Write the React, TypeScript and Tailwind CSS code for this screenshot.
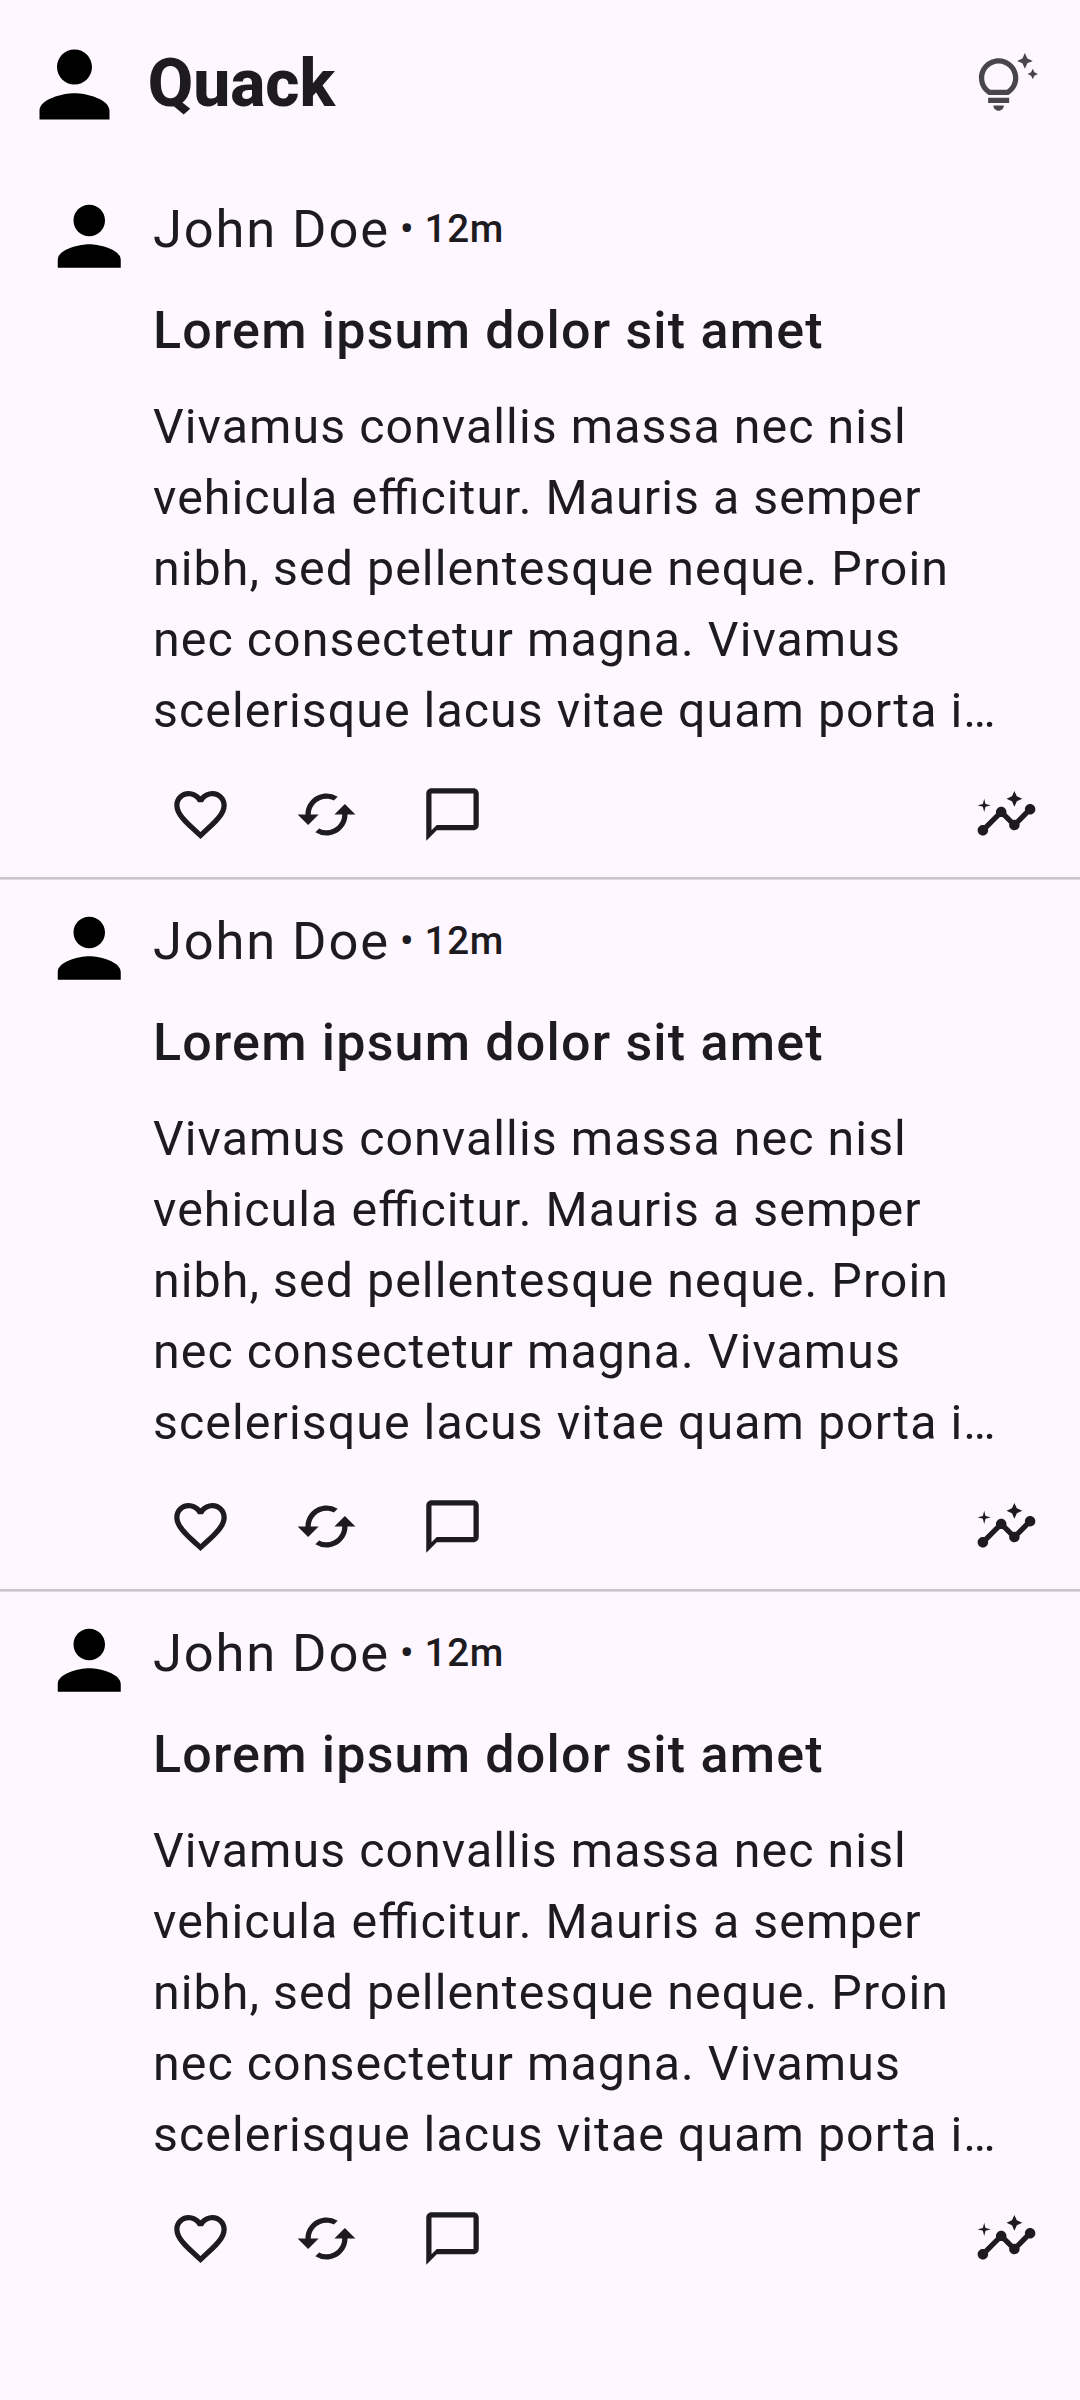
import React from "react";
import {
  MdCached,
  MdChatBubbleOutline,
  MdFavoriteBorder,
  MdInsights,
  MdOutlineTipsAndUpdates,
  MdPerson,
} from "react-icons/md";

const BODY_LINES = [
  "Vivamus convallis massa nec nisl",
  "vehicula efficitur. Mauris a semper",
  "nibh, sed pellentesque neque. Proin",
  "nec consectetur magna. Vivamus",
  "scelerisque lacus vitae quam porta i…",
];

const POSTS = [1, 2, 3];

function Header() {
  return (
    <header className="flex h-[168px] items-center pl-[22px] pr-[42px]">
      <MdPerson className="size-[105px] text-black" />
      <h1 className="ml-[20.75px] text-[65.8px] font-extrabold leading-[80px]">Quack</h1>
      <MdOutlineTipsAndUpdates className="ml-auto size-[63px] text-[#49454f]" />
    </header>
  );
}

function Post() {
  return (
    <article className="flex h-[709px] pl-[42px]">
      <MdPerson className="mt-[20.75px] size-[94.5px] shrink-0 text-black" />
      <div className="ml-[16.5px] flex min-w-0 flex-1 flex-col pt-[29px]">
        <div className="flex h-16 gap-[10px]">
          <span className="text-[52.5px] leading-[64px] tracking-[1.85px]">John Doe</span>
          <span className="text-[38.5px] font-medium leading-[64px] tracking-[0.8px]">• 12m</span>
        </div>
        <h2 className="mt-[37px] text-[52px] font-medium leading-[66px] tracking-[1.2px]">
          Lorem ipsum dolor sit amet
        </h2>
        <div className="mt-[27px] whitespace-nowrap text-[48.3px] leading-[71px] tracking-[1.06px] [font-feature-settings:'liga'_1]">
          {BODY_LINES.map((line) => (
            <p key={line}>{line}</p>
          ))}
        </div>
        <div className="mt-[36.75px] flex items-center pl-[15.75px] pr-[42.5px]">
          <MdFavoriteBorder className="size-[63px]" />
          <MdCached className="ml-[63px] size-[63px]" />
          <MdChatBubbleOutline className="ml-[63px] size-[63px]" />
          <MdInsights className="ml-auto size-[63px]" />
        </div>
      </div>
    </article>
  );
}

export default function App() {
  return (
    <div className="h-[2400px] w-[1080px] overflow-hidden bg-[#fef7ff] font-['Roboto',sans-serif] text-[#1d1b20]">
      <Header />
      <main>
        {POSTS.map((id, i) => (
          <React.Fragment key={id}>
            {i > 0 && <hr className="h-[3px] border-0 border-b border-[#dfd8e3] bg-[#cac4d0]" />}
            <Post />
          </React.Fragment>
        ))}
      </main>
    </div>
  );
}
